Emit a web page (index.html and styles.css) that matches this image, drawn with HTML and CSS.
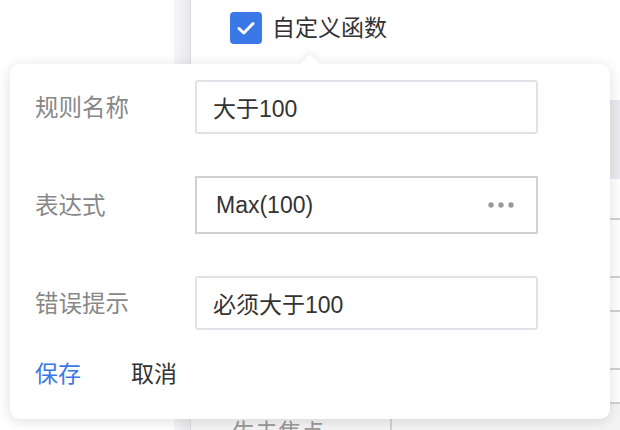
FILE: index.html
```html
<!DOCTYPE html>
<html lang="zh-CN">
<head>
    <meta charset="UTF-8">
    <title>校验规则</title>
    <link rel="stylesheet" href="styles.css">
</head>
<body>

    <div class="page">
        <!-- left blank side -->
        <div class="side"></div>
        <div class="gutter"></div>

        <!-- main panel behind the popover -->
        <div class="main">
            <div class="filter-row">
                <span class="checkbox">
                    <svg width="18" height="14" viewBox="0 0 18 14">
                        <path d="M2 7.5 L6.8 12 L16 2.5" fill="none" stroke="#fff" stroke-width="3" stroke-linecap="round" stroke-linejoin="round"/>
                    </svg>
                </span>
                <span class="filter-label">自定义函数</span>
            </div>

            <div class="table">
                <div class="table-head"></div>
                <div class="table-row h40"></div>
                <div class="table-row h56"></div>
                <div class="table-row h32"></div>
                <div class="table-row h56"></div>
                <div class="table-row h32"></div>
                <div class="table-row last">
                    <div class="cell first">生未焦点</div>
                    <div class="cell"></div>
                </div>
            </div>
        </div>

        <!-- rule editor popover -->
        <div class="popover">
            <div class="arrow"></div>

            <div class="form-row">
                <label class="label">规则名称</label>
                <div class="field">大于100</div>
            </div>

            <div class="form-row">
                <label class="label">表达式</label>
                <div class="field expr">
                    <span>Max(100)</span>
                    <svg class="more" width="26" height="6" viewBox="0 0 26 6">
                        <circle cx="3" cy="3" r="2.7" fill="#999"/>
                        <circle cx="13" cy="3" r="2.7" fill="#999"/>
                        <circle cx="23" cy="3" r="2.7" fill="#999"/>
                    </svg>
                </div>
            </div>

            <div class="form-row">
                <label class="label">错误提示</label>
                <div class="field">必须大于100</div>
            </div>

            <div class="actions">
                <span class="btn save">保存</span>
                <span class="btn">取消</span>
            </div>
        </div>
    </div>

</body>
</html>
```

FILE: styles.css
```css
body {
    margin: 0;
    font-family: "Liberation Sans", "Noto Sans CJK SC", sans-serif;
    color: #333;
    background: #fff;
}
.page {
    position: relative;
    display: flex;
    width: 620px;
    height: 430px;
    overflow: hidden;
}
.side {
    width: 174px;
    background: #fff;
}
.gutter {
    width: 16px;
    background: linear-gradient(to right, #f6f6f7, #e8e9ec);
}
.main {
    flex: 1;
    border-left: 1px solid #dcdcdc;
    background: #fff;
}
.filter-row {
    display: flex;
    align-items: flex-start;
    height: 100px;
    box-sizing: border-box;
    padding: 12px 0 0 39px;
}
.checkbox {
    display: flex;
    align-items: center;
    justify-content: center;
    width: 32px;
    height: 32px;
    border-radius: 4px;
    background: #3a78e8;
}
.filter-label {
    margin-left: 10px;
    font-size: 23px;
    line-height: 32px;
    color: #333;
}
.table-head {
    height: 79px;
    background: #e9eaef;
}
.table-row {
    border-bottom: 2px solid #d2d2d2;
}
.h40 { height: 39px; }
.h56 { height: 56px; }
.h32 { height: 32px; }
.table-row.last {
    display: flex;
    border-bottom: none;
    height: 40px;
    background: #f4f4f5;
}
.cell {
    flex: 1;
    padding: 16px 0 0 41px;
    font-size: 23px;
    line-height: 24px;
    color: #999;
}
.cell.first {
    flex: none;
    width: 158px;
    border-right: 2px solid #d2d2d2;
}
.popover {
    position: absolute;
    left: 10px;
    top: 64px;
    width: 600px;
    height: 355px;
    box-sizing: border-box;
    padding: 16px 25px 0;
    background: #fff;
    border-radius: 10px;
    box-shadow: 0 2px 14px rgba(0, 0, 0, 0.13);
}
.arrow {
    position: absolute;
    left: 293px;
    top: -7px;
    width: 14px;
    height: 14px;
    background: #fff;
    transform: rotate(45deg);
    box-shadow: -3px -3px 6px rgba(0, 0, 0, 0.05);
}
.form-row {
    position: relative;
    display: flex;
    align-items: center;
    margin-bottom: 42px;
}
.label {
    width: 160px;
    margin-top: -2px;
    font-size: 23.5px;
    color: #888;
}
.field {
    display: flex;
    align-items: center;
    width: 343px;
    height: 54px;
    box-sizing: border-box;
    padding: 0 16px;
    border: 2px solid #dfe2e8;
    border-radius: 3px;
    font-size: 23px;
    color: #333;
}
.field.expr {
    height: 58px;
    padding: 0 22px 0 19px;
    justify-content: space-between;
    border-color: #d2d2d2;
    border-radius: 0;
}
.actions {
    display: flex;
    gap: 50px;
    margin-top: -13px;
    font-size: 23px;
    line-height: 30px;
}
.btn {
    color: #333;
}
.btn.save {
    color: #3a78e6;
}
```
